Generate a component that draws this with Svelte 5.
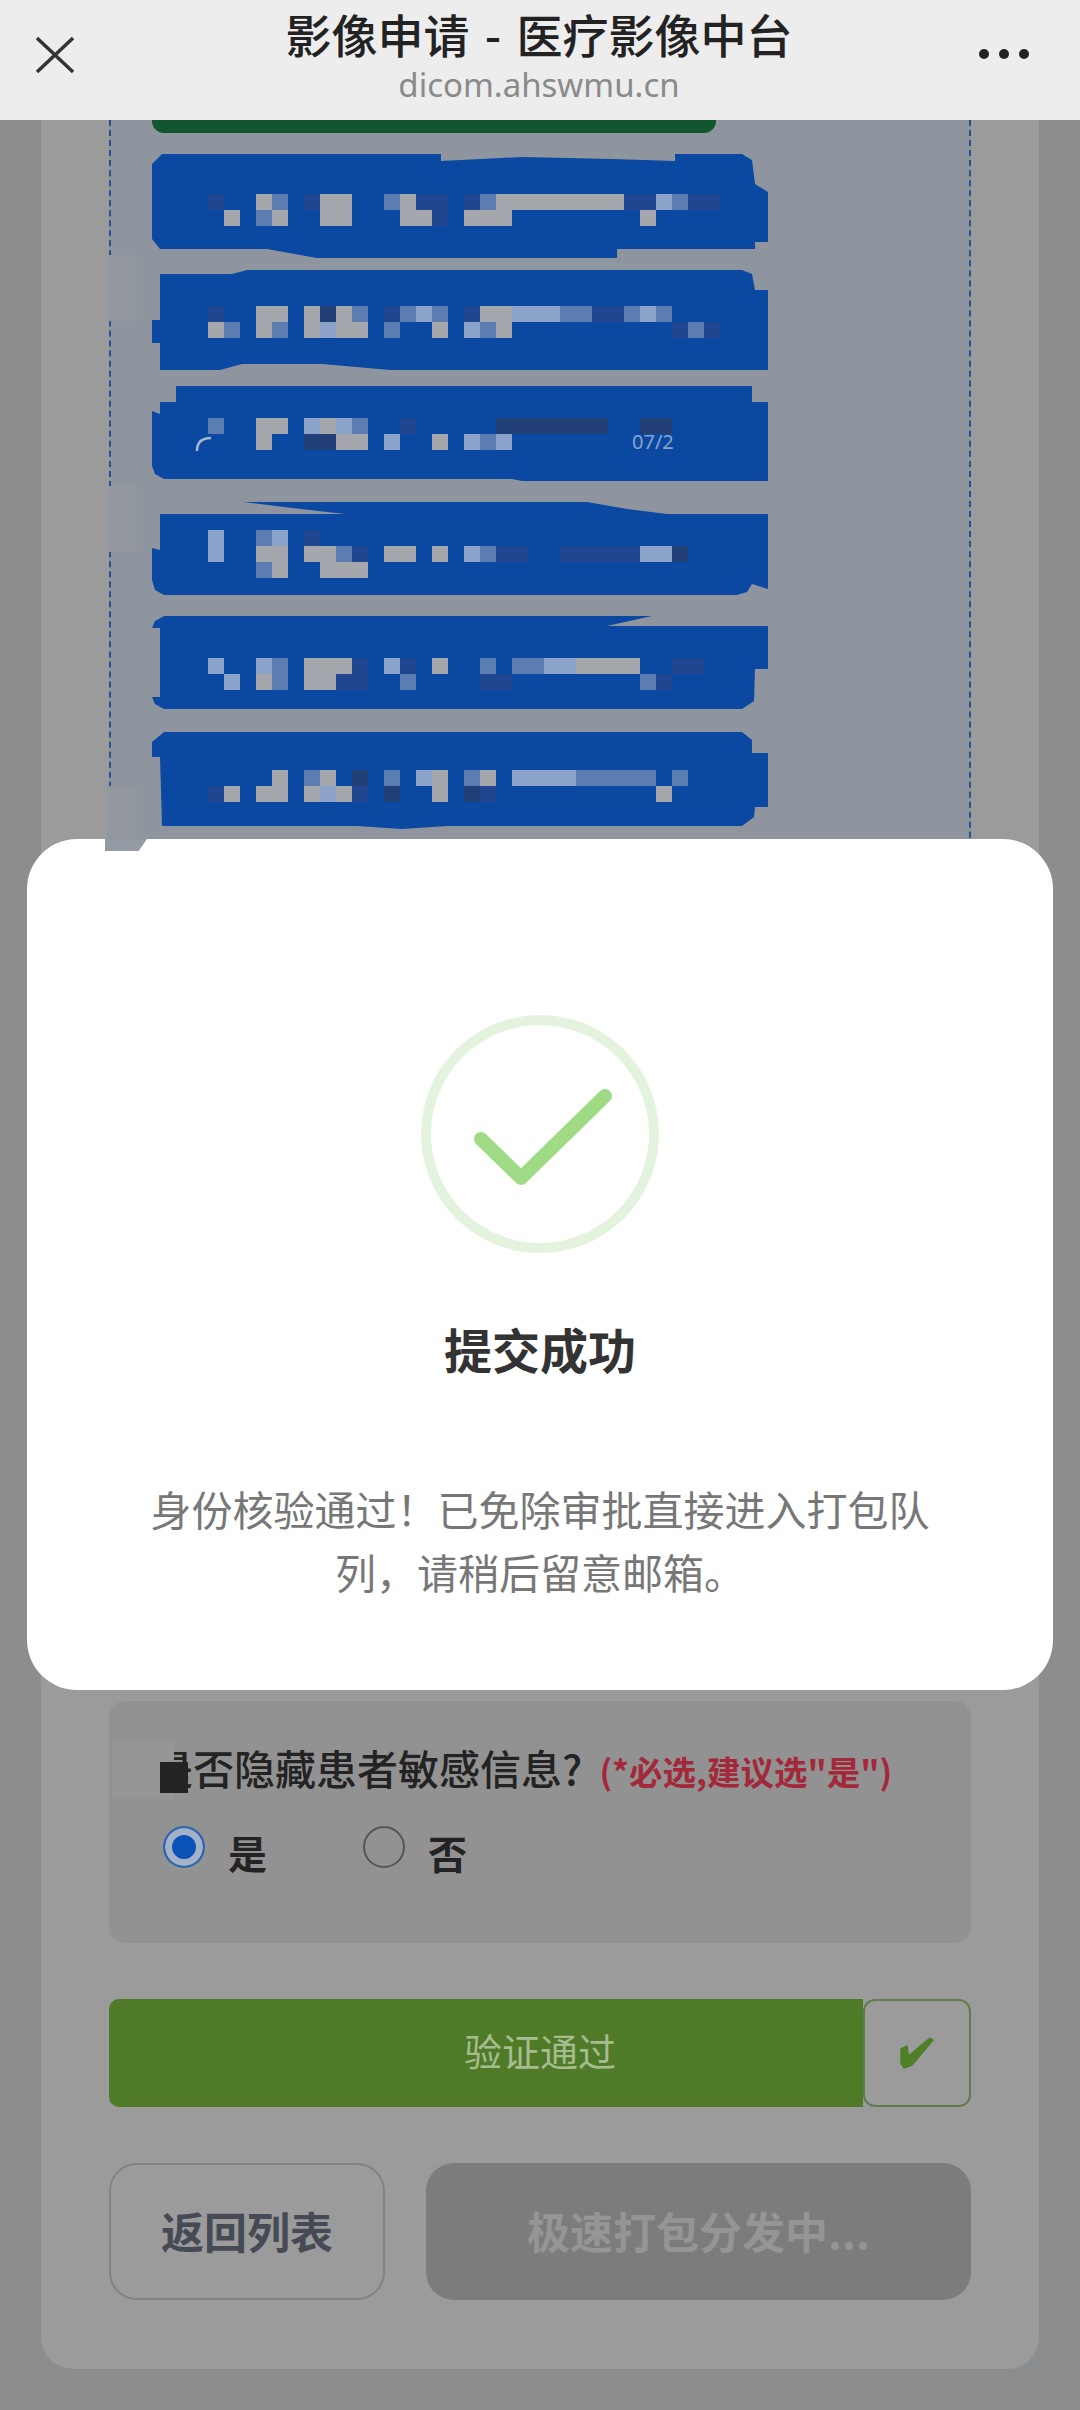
<script>
  // mosaic letters: g grey, l light blue, m mid blue, d dark blue, n navy, . nothing
  const rows = [
    { cls: "r1", lines: ["d..gm.dgg..mgdd.dmggggggggddlmdd.", ".g.mg..gg...ggd.ggg........g...."] },
    { cls: "r2", lines: ["d..gg.gngm.dmlm.dgglllmmddmlm...", "gm.gm.glgg.m..g.lmg..........dmd"] },
    { cls: "r3", lines: ["m..gg.lglm..d.....nnnnnnn..nn...", "...g..nngg.l..g.lml............."] },
    { cls: "r4", lines: ["l..ml.d.........................", "l..gg.ggmd.gg.g.lmdd..dddddlln..", "...mg..ggg......................"] },
    { cls: "r5", lines: ["l..lm.gggd.ld.g..m.mmllgggg..dd.", ".l.gm.ggdd..m....dd........md..."] },
    { cls: "r6", lines: ["....g.mg.n.m.lg.mg.llllmmmmm.m..", "dg.gg.glgd.n..g.nd..........g..."] }
  ];
  const cellClass = { g: "g", l: "l", m: "m", d: "d", n: "n", ".": "" };
</script>

<div class="page">
  <header class="bar">
    <svg class="close" width="38" height="36" viewBox="0 0 38 36" fill="none" stroke="#333" stroke-width="3.4">
      <path d="M1 1 37 35M37 1 1 35" />
    </svg>
    <div class="bar-title">
      <div class="title">影像申请 - 医疗影像中台</div>
      <div class="host">dicom.ahswmu.cn</div>
    </div>
    <div class="dots"><i></i><i></i><i></i></div>
  </header>

  <main class="card">
    <section class="dashed">
      <div class="gap gap1"></div>
      <div class="gap gap2"></div>
      <div class="gap gap3"></div>
      <div class="green-top"></div>
      {#each rows as row}
        <div class="row {row.cls}">
          {#each row.lines as line}
            <div class="mosaic">
              {#each line.split("") as ch}
                <span class="cell {cellClass[ch]}"></span>
              {/each}
            </div>
          {/each}
          {#if row.cls === "r3"}
            <svg class="arc" width="18" height="16" viewBox="0 0 18 16" fill="none" stroke="#a9b7d0" stroke-width="2.5">
              <path d="M2 15C2 6 7 2 16 2" />
            </svg>
            <span class="leak">07/2</span>
          {/if}
        </div>
      {/each}
    </section>

    <section class="panel">
      <div class="smudge"></div>
      <div class="blot"></div>
      <div class="question">是否隐藏患者敏感信息? <span class="req">(*必选,建议选"是")</span></div>
      <div class="radios">
        <label class="radio"><span class="dot on"></span>是</label>
        <label class="radio"><span class="dot"></span>否</label>
      </div>
    </section>

    <div class="verify">
      <div class="verify-bar">验证通过</div>
      <div class="verify-tick">
        <svg width="34" height="32" viewBox="0 0 34 32" fill="#4f7f27" stroke="#4f7f27" stroke-width="1.5" stroke-linejoin="round">
          <path d="M1 12 7 9 8.500 19 30 1 33 3 12 28 4 31 1 26Z" />
        </svg>
      </div>
    </div>

    <div class="actions">
      <button class="back">返回列表</button>
      <button class="pack">极速打包分发中...</button>
    </div>
  </main>

  <div class="patch"></div>
  <div class="modal">
    <svg class="ok" width="238" height="238" viewBox="0 0 238 238" fill="none">
      <circle cx="119" cy="119" r="114" stroke="#e4f3de" stroke-width="10" />
      <path d="M60 124 100 163 184 81" stroke="#9fdb85" stroke-width="14" stroke-linecap="round" stroke-linejoin="round" />
    </svg>
    <h2>提交成功</h2>
    <p>身份核验通过！已免除审批直接进入打包队列，请稍后留意邮箱。</p>
  </div>
</div>

<style>
  :global(body) {
    margin: 0;
    background: #8c8d8f;
    font-family: "Noto Sans CJK SC", "Noto Sans", sans-serif;
  }
  .page {
    position: relative;
    width: 1080px;
    height: 2410px;
    overflow: hidden;
    background: #8c8d8f;
  }
  .bar {
    height: 120px;
    background: #ededed;
    display: flex;
    align-items: flex-start;
    justify-content: space-between;
    padding: 0 51px 0 36px;
    box-sizing: border-box;
  }
  .close {
    margin-top: 37px;
  }
  .bar-title {
    text-align: center;
    margin: 5px 0 0 25px;
  }
  .title {
    font-size: 46px;
    line-height: 56px;
    font-weight: 500;
    word-spacing: 5px;
    color: #222;
    white-space: nowrap;
  }
  .host {
    font-family: "Noto Sans", sans-serif;
    font-size: 33px;
    line-height: 48px;
    color: #8a8a8a;
  }
  .dots {
    display: flex;
    gap: 10px;
    margin-top: 49px;
  }
  .dots i {
    width: 10px;
    height: 10px;
    border-radius: 50%;
    background: #222;
  }

  .card {
    width: 998px;
    margin-left: 41px;
    box-sizing: border-box;
    padding: 0 68px 69px;
    background: #9b9b9b;
    border-radius: 0 0 32px 32px;
  }
  .dashed {
    position: relative;
    height: 1530px;
    padding-left: 41px;
    box-sizing: border-box;
    background: #8e959e;
    border-left: 2px dashed #2c4f8e;
    border-right: 2px dashed #2c4f8e;
    display: flex;
    flex-direction: column;
    align-items: flex-start;
  }
  .gap {
    position: absolute;
    left: -4px;
    width: 30px;
    background: #93979e;
  }
  .gap1 { top: 135px; height: 66px; }
  .gap2 { top: 366px; height: 66px; }
  .gap3 { top: 666px; height: 53px; }
  .green-top {
    width: 564px;
    height: 13px;
    background: #12552f;
    border-radius: 0 0 12px 12px;
    margin-bottom: 21px;
  }
  .row {
    position: relative;
    width: 616px;
    padding-left: 56px;
    box-sizing: border-box;
    background: #0b48a2;
    flex-shrink: 0;
  }
  .mosaic {
    display: flex;
    height: 16px;
  }
  .cell {
    width: 16px;
    height: 16px;
    flex-shrink: 0;
  }
  .g { background: #a6a7ac; }
  .l { background: #8ba3c8; }
  .m { background: #5c7db0; }
  .d { background: #1f468f; }
  .n { background: #223f78; }
  .r1 {
    height: 104px;
    padding-top: 40px;
    margin-bottom: 12px;
    clip-path: polygon(10px 0, 289px 0, 289px 7px, 370px 3px, 460px 5px, 523px 7px, 523px 0, 590px 0, 600px 6px, 603px 30px, 616px 38px, 616px 88px, 603px 88px, 603px 95px, 465px 95px, 465px 104px, 165px 104px, 115px 95px, 8px 95px, 0 85px, 0 10px);
  }
  .r2 {
    height: 100px;
    padding-top: 36px;
    margin-bottom: 16px;
    clip-path: polygon(8px 4px, 80px 4px, 95px 0, 590px 0, 600px 4px, 603px 20px, 616px 20px, 616px 100px, 238px 100px, 170px 94px, 90px 94px, 68px 100px, 8px 100px, 8px 73px, 0 73px, 0 50px, 8px 50px);
  }
  .r3 {
    height: 95px;
    padding-top: 32px;
    margin-bottom: 21px;
    clip-path: polygon(24px 0, 600px 0, 600px 16px, 616px 16px, 616px 95px, 370px 95px, 360px 93px, 12px 93px, 3px 88px, 0 80px, 0 25px, 8px 28px, 8px 16px, 24px 16px);
  }
  .r4 {
    height: 93px;
    padding-top: 28px;
    margin-bottom: 21px;
    clip-path: polygon(91px 0, 435px 0, 475px 7px, 515px 12px, 616px 12px, 616px 87px, 600px 82px, 595px 90px, 585px 93px, 12px 93px, 3px 88px, 0 78px, 0 46px, 8px 48px, 8px 12px, 193px 12px, 140px 6px);
  }
  .r5 {
    height: 93px;
    padding-top: 42px;
    margin-bottom: 23px;
    clip-path: polygon(12px 0, 500px 0, 455px 10px, 616px 10px, 616px 53px, 603px 53px, 602px 85px, 590px 93px, 12px 93px, 3px 88px, 0 81px, 8px 81px, 8px 12px, 0 12px, 3px 5px);
  }
  .r6 {
    height: 97px;
    padding-top: 38px;
    clip-path: polygon(12px 0, 590px 0, 600px 8px, 600px 21px, 616px 21px, 616px 75px, 603px 75px, 602px 85px, 590px 94px, 295px 94px, 250px 97px, 205px 94px, 10px 94px, 8px 25px, 0 25px, 0 10px);
  }
  .arc {
    position: absolute;
    left: 43px;
    top: 50px;
  }
  .leak {
    position: absolute;
    left: 480px;
    top: 46px;
    font-family: "Noto Sans", sans-serif;
    font-size: 20px;
    line-height: 20px;
    color: #8ba3c8;
  }

  .panel {
    position: relative;
    margin-top: 51px;
    height: 242px;
    box-sizing: border-box;
    padding: 38px 0 0 43px;
    background: #929292;
    border-radius: 16px;
  }
  .smudge {
    position: absolute;
    left: 3px;
    top: 40px;
    width: 62px;
    height: 58px;
    background: #969696;
  }
  .blot {
    position: absolute;
    left: 51px;
    top: 61px;
    width: 28px;
    height: 31px;
    background: #232323;
  }
  .smudge, .blot {
    z-index: 1;
  }
  .question {
    position: relative;
    font-size: 41px;
    line-height: 56px;
    font-weight: 500;
    color: #232323;
    white-space: nowrap;
  }
  .req {
    font-size: 33.5px;
    font-weight: 700;
    color: #a3283a;
    margin-left: 8px;
  }
  .radios {
    display: flex;
    margin-top: 26px;
    padding-left: 11px;
    gap: 96px;
  }
  .radio {
    display: flex;
    align-items: flex-start;
    gap: 23px;
    font-size: 39px;
    line-height: 54px;
    font-weight: 700;
    color: #232323;
  }
  .dot {
    width: 42px;
    height: 42px;
    box-sizing: border-box;
    border-radius: 50%;
    border: 2.5px solid #555;
    margin-top: 1px;
  }
  .dot.on {
    border-color: #2f64ae;
    background: #0a52b5;
    box-shadow: inset 0 0 0 7px #a3b2c9;
  }

  .verify {
    display: flex;
    height: 108px;
    margin-top: 56px;
  }
  .verify-bar {
    flex: 1;
    padding-left: 108px;
    background: #4f7a27;
    border-radius: 10px 0 0 10px;
    color: #a5bc90;
    font-size: 38px;
    line-height: 102px;
    text-align: center;
  }
  .verify-tick {
    width: 108px;
    box-sizing: border-box;
    border: 2px solid #5f7d4c;
    border-radius: 12px;
    display: flex;
    align-items: center;
    justify-content: center;
  }

  .actions {
    display: flex;
    gap: 41px;
    margin-top: 56px;
  }
  .actions button {
    height: 137px;
    border-radius: 28px;
    font-family: inherit;
    font-size: 43px;
    font-weight: 700;
    padding: 0 0 4px;
  }
  .back {
    width: 276px;
    background: transparent;
    border: 2px solid #828282;
    color: #454a54;
  }
  .pack {
    flex: 1;
    background: #7c7c7c;
    border: none;
    color: #959595;
  }

  .modal {
    position: absolute;
    left: 27px;
    top: 839px;
    width: 1026px;
    height: 851px;
    box-sizing: border-box;
    padding-top: 176px;
    background: #fff;
    border-radius: 50px;
    text-align: center;
  }
  .ok {
    display: block;
    margin: 0 auto;
  }
  .modal h2 {
    margin: 60px 0 0;
    font-size: 48px;
    line-height: 70px;
    font-weight: 700;
    color: #333;
  }
  .modal p {
    margin: 94px auto 0;
    width: 790px;
    font-size: 41px;
    line-height: 63px;
    color: #777;
  }
  .patch {
    position: absolute;
    left: 105px;
    top: 839px;
    width: 42px;
    height: 12px;
    z-index: 1;
    background: #949aa4;
    clip-path: polygon(0 0, 100% 0, 80% 100%, 0 100%);
  }
</style>
